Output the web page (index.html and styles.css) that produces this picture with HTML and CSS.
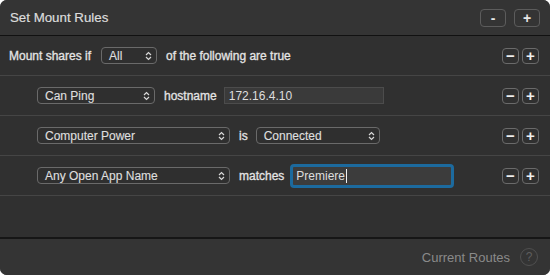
FILE: index.html
```html
<!DOCTYPE html>
<html>
<head>
<meta charset="utf-8">
<link rel="stylesheet" href="styles.css">
</head>
<body>
<div class="window">
  <header class="titlebar">
    <span class="title">Set Mount Rules</span>
    <div class="head-btns">
      <button class="hbtn">-</button>
      <button class="hbtn">+</button>
    </div>
  </header>
  <div class="rows">
    <div class="row row-top">
      <span class="label">Mount shares if</span>
      <div class="popup w-all"><span>All</span><svg class="chev" width="7" height="10" viewBox="0 0 7 10"><path d="M1 4 L3.5 1.5 L6 4 M1 6 L3.5 8.5 L6 6" fill="none" stroke="#d8d8d8" stroke-width="1.2"/></svg></div>
      <span class="label">of the following are true</span>
      <div class="pm"><button class="sbtn">&minus;</button><button class="sbtn">+</button></div>
    </div>
    <div class="row">
      <div class="popup w-ping"><span>Can Ping</span><svg class="chev" width="7" height="10" viewBox="0 0 7 10"><path d="M1 4 L3.5 1.5 L6 4 M1 6 L3.5 8.5 L6 6" fill="none" stroke="#d8d8d8" stroke-width="1.2"/></svg></div>
      <span class="label l-host">hostname</span>
      <div class="field w-host">172.16.4.10</div>
      <div class="pm"><button class="sbtn">&minus;</button><button class="sbtn">+</button></div>
    </div>
    <div class="row">
      <div class="popup w-long"><span>Computer Power</span><svg class="chev" width="7" height="10" viewBox="0 0 7 10"><path d="M1 4 L3.5 1.5 L6 4 M1 6 L3.5 8.5 L6 6" fill="none" stroke="#d8d8d8" stroke-width="1.2"/></svg></div>
      <span class="label l-is">is</span>
      <div class="popup w-conn"><span>Connected</span><svg class="chev" width="7" height="10" viewBox="0 0 7 10"><path d="M1 4 L3.5 1.5 L6 4 M1 6 L3.5 8.5 L6 6" fill="none" stroke="#d8d8d8" stroke-width="1.2"/></svg></div>
      <div class="pm"><button class="sbtn">&minus;</button><button class="sbtn">+</button></div>
    </div>
    <div class="row">
      <div class="popup w-long"><span>Any Open App Name</span><svg class="chev" width="7" height="10" viewBox="0 0 7 10"><path d="M1 4 L3.5 1.5 L6 4 M1 6 L3.5 8.5 L6 6" fill="none" stroke="#d8d8d8" stroke-width="1.2"/></svg></div>
      <span class="label l-match">matches</span>
      <div class="field focused w-match"><span>Premiere</span><span class="caret"></span></div>
      <div class="pm"><button class="sbtn">&minus;</button><button class="sbtn">+</button></div>
    </div>
  </div>
  <div class="spacer"></div>
  <footer class="footer">
    <span class="routes">Current Routes</span>
    <span class="help">?</span>
  </footer>
</div>
</body>
</html>
```

FILE: styles.css
```css
html, body {
  margin: 0;
  padding: 0;
  background: #ffffff;
}
body {
  font-family: "Liberation Sans", Arial, sans-serif;
  width: 550px;
  height: 275px;
  overflow: hidden;
}
.window {
  width: 550px;
  height: 275px;
  background: #303030;
  border-radius: 7px;
  overflow: hidden;
  display: flex;
  flex-direction: column;
}
.titlebar {
  height: 35px;
  flex: none;
  background: #343434;
  border-bottom: 1px solid #111111;
  display: flex;
  align-items: center;
  justify-content: space-between;
  padding: 0 10px 0 10px;
}
.title {
  color: #dcdcdc;
  font-size: 13.3px;
  -webkit-text-stroke: 0.2px #dcdcdc;
}
.head-btns {
  display: flex;
  gap: 8px;
  margin-top: 1px;
}
.hbtn {
  width: 26px;
  height: 18px;
  box-sizing: border-box;
  border: 1px solid #5c5c5c;
  border-radius: 4px;
  background: transparent;
  color: #e6e6e6;
  font-family: "Liberation Sans", Arial, sans-serif;
  font-size: 14px;
  font-weight: bold;
  padding: 0;
  line-height: 14px;
  display: flex;
  align-items: center;
  justify-content: center;
}
.rows {
  display: flex;
  flex-direction: column;
  flex: none;
}
.row {
  height: 39px;
  border-bottom: 1px solid #454545;
  display: flex;
  align-items: center;
  padding: 0 11px 0 37px;
  gap: 9px;
}
.row-top {
  padding-left: 9px;
}
.row-top .popup {
  margin-left: 1px;
}
.label {
  color: #e4e4e4;
  font-size: 12px;
  -webkit-text-stroke: 0.3px #e4e4e4;
}
.popup {
  height: 17px;
  box-sizing: border-box;
  border: 1px solid #6a6a6a;
  border-radius: 4px;
  background: #2f2f2f;
  display: flex;
  align-items: center;
  justify-content: space-between;
  padding: 0 4px 0 7px;
  color: #dedede;
  font-size: 12px;
  -webkit-text-stroke: 0.15px #dedede;
}
.chev {
  display: block;
}
.w-all { width: 56px; }
.w-ping { width: 118px; }
.w-long { width: 193px; }
.w-conn { width: 124px; }
.l-is { margin-right: -1px; }
.field {
  height: 17px;
  box-sizing: border-box;
  background: #3a3a3a;
  border: 1px solid #4c4c4c;
  color: #dedede;
  font-size: 12px;
  display: flex;
  align-items: center;
  padding: 0 4px;
}
.w-host { width: 160px; margin-left: -2px; }
.w-match {
  width: 164px;
  height: 24px;
  border: 3px solid #1c6a9e;
  border-radius: 4px;
  background: #3c3c3c;
  padding: 0 3px;
  margin-left: -3px;
}
.caret {
  display: inline-block;
  width: 1px;
  height: 14px;
  background: #f0f0f0;
  margin-left: 1px;
}
.pm {
  margin-left: auto;
  display: flex;
  gap: 3px;
}
.sbtn {
  width: 17px;
  height: 16px;
  box-sizing: border-box;
  border: 1px solid #6a6a6a;
  border-radius: 4px;
  background: transparent;
  color: #f0f0f0;
  font-family: "Liberation Sans", Arial, sans-serif;
  font-size: 15px;
  font-weight: bold;
  padding: 0;
  line-height: 14px;
  display: flex;
  align-items: center;
  justify-content: center;
}
.spacer {
  flex: 1;
}
.footer {
  height: 36px;
  flex: none;
  border-top: 2px solid #161616;
  background: #343434;
  display: flex;
  align-items: center;
  justify-content: flex-end;
  padding: 0 12px 0 0;
  gap: 10px;
}
.routes {
  color: #8a8a8a;
  font-size: 13px;
}
.help {
  width: 18px;
  height: 18px;
  box-sizing: border-box;
  border: 1px solid #505050;
  border-radius: 50%;
  color: #5e5e5e;
  font-size: 12px;
  display: flex;
  align-items: center;
  justify-content: center;
}
```
